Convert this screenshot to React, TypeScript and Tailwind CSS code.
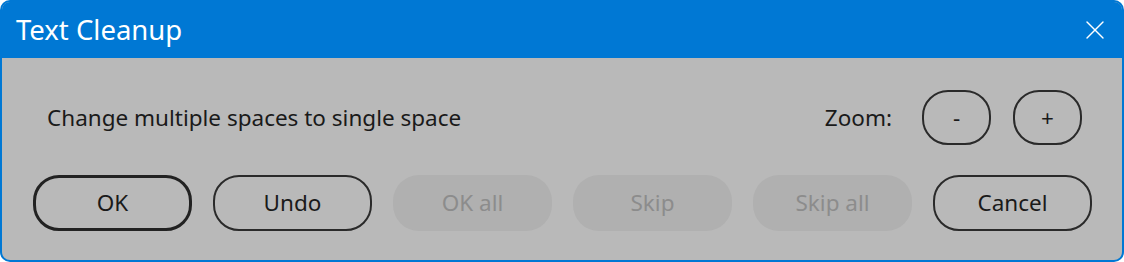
import { X } from 'lucide-react';

const font = { fontFamily: '"Noto Sans", "Open Sans", sans-serif' };

type Btn = { label: string; focused?: boolean; disabled?: boolean };

const buttons: Btn[] = [
    { label: 'OK', focused: true },
    { label: 'Undo' },
    { label: 'OK all', disabled: true },
    { label: 'Skip', disabled: true },
    { label: 'Skip all', disabled: true },
    { label: 'Cancel' },
];

function DialogButton({ label, focused, disabled }: Btn) {
    if (disabled) {
        return (
            <button
                disabled
                className="flex h-[56px] w-[159px] shrink-0 items-center justify-center rounded-[26px] bg-[#b0b0b0] text-[22.5px] text-[#8c8c8c]"
            >
                {label}
            </button>
        );
    }
    return (
        <button
            className={
                focused
                    ? 'flex h-[56px] w-[159px] shrink-0 items-center justify-center rounded-[26px] border-[3px] border-[#222222] text-[22.5px] text-[#1a1a1a]'
                    : 'flex h-[56px] w-[159px] shrink-0 items-center justify-center rounded-[26px] border-2 border-[#2a2a2a] text-[22.5px] text-[#1a1a1a]'
            }
        >
            {label}
        </button>
    );
}

export default function App() {
    return (
        <div
            style={font}
            className="flex h-[262px] w-[1124px] flex-col overflow-hidden rounded-[10px] border-2 border-[#0078d4] bg-[#b9b9b9]"
        >
            <div className="flex h-[56px] shrink-0 items-center justify-between bg-[#0078d4] pr-[11px] pl-[14px]">
                <h1 className="text-[27.5px] leading-none text-white">
                    Text Cleanup
                </h1>
                <X className="h-[32px] w-[32px] text-white" strokeWidth={1} />
            </div>
            <div className="flex flex-1 flex-col pt-[32px] pb-[30px]">
                <div className="flex h-[55px] items-center justify-between pr-[40px] pl-[45px]">
                    <p className="text-[22.5px] text-[#1a1a1a]">
                        Change multiple spaces to single space
                    </p>
                    <div className="flex items-center">
                        <span className="mr-[30px] text-[22.5px] text-[#1a1a1a]">
                            Zoom:
                        </span>
                        <button className="flex h-[55px] w-[69px] items-center justify-center rounded-[26px] border-2 border-[#2a2a2a] text-[22.5px] text-[#1a1a1a]">
                            -
                        </button>
                        <button className="ml-[22px] flex h-[55px] w-[69px] items-center justify-center rounded-[26px] border-2 border-[#2a2a2a] text-[22.5px] text-[#1a1a1a]">
                            +
                        </button>
                    </div>
                </div>
                <div className="mt-[30px] flex gap-[21px] pl-[31px]">
                    {buttons.map((b) => (
                        <DialogButton key={b.label} {...b} />
                    ))}
                </div>
            </div>
        </div>
    );
}
